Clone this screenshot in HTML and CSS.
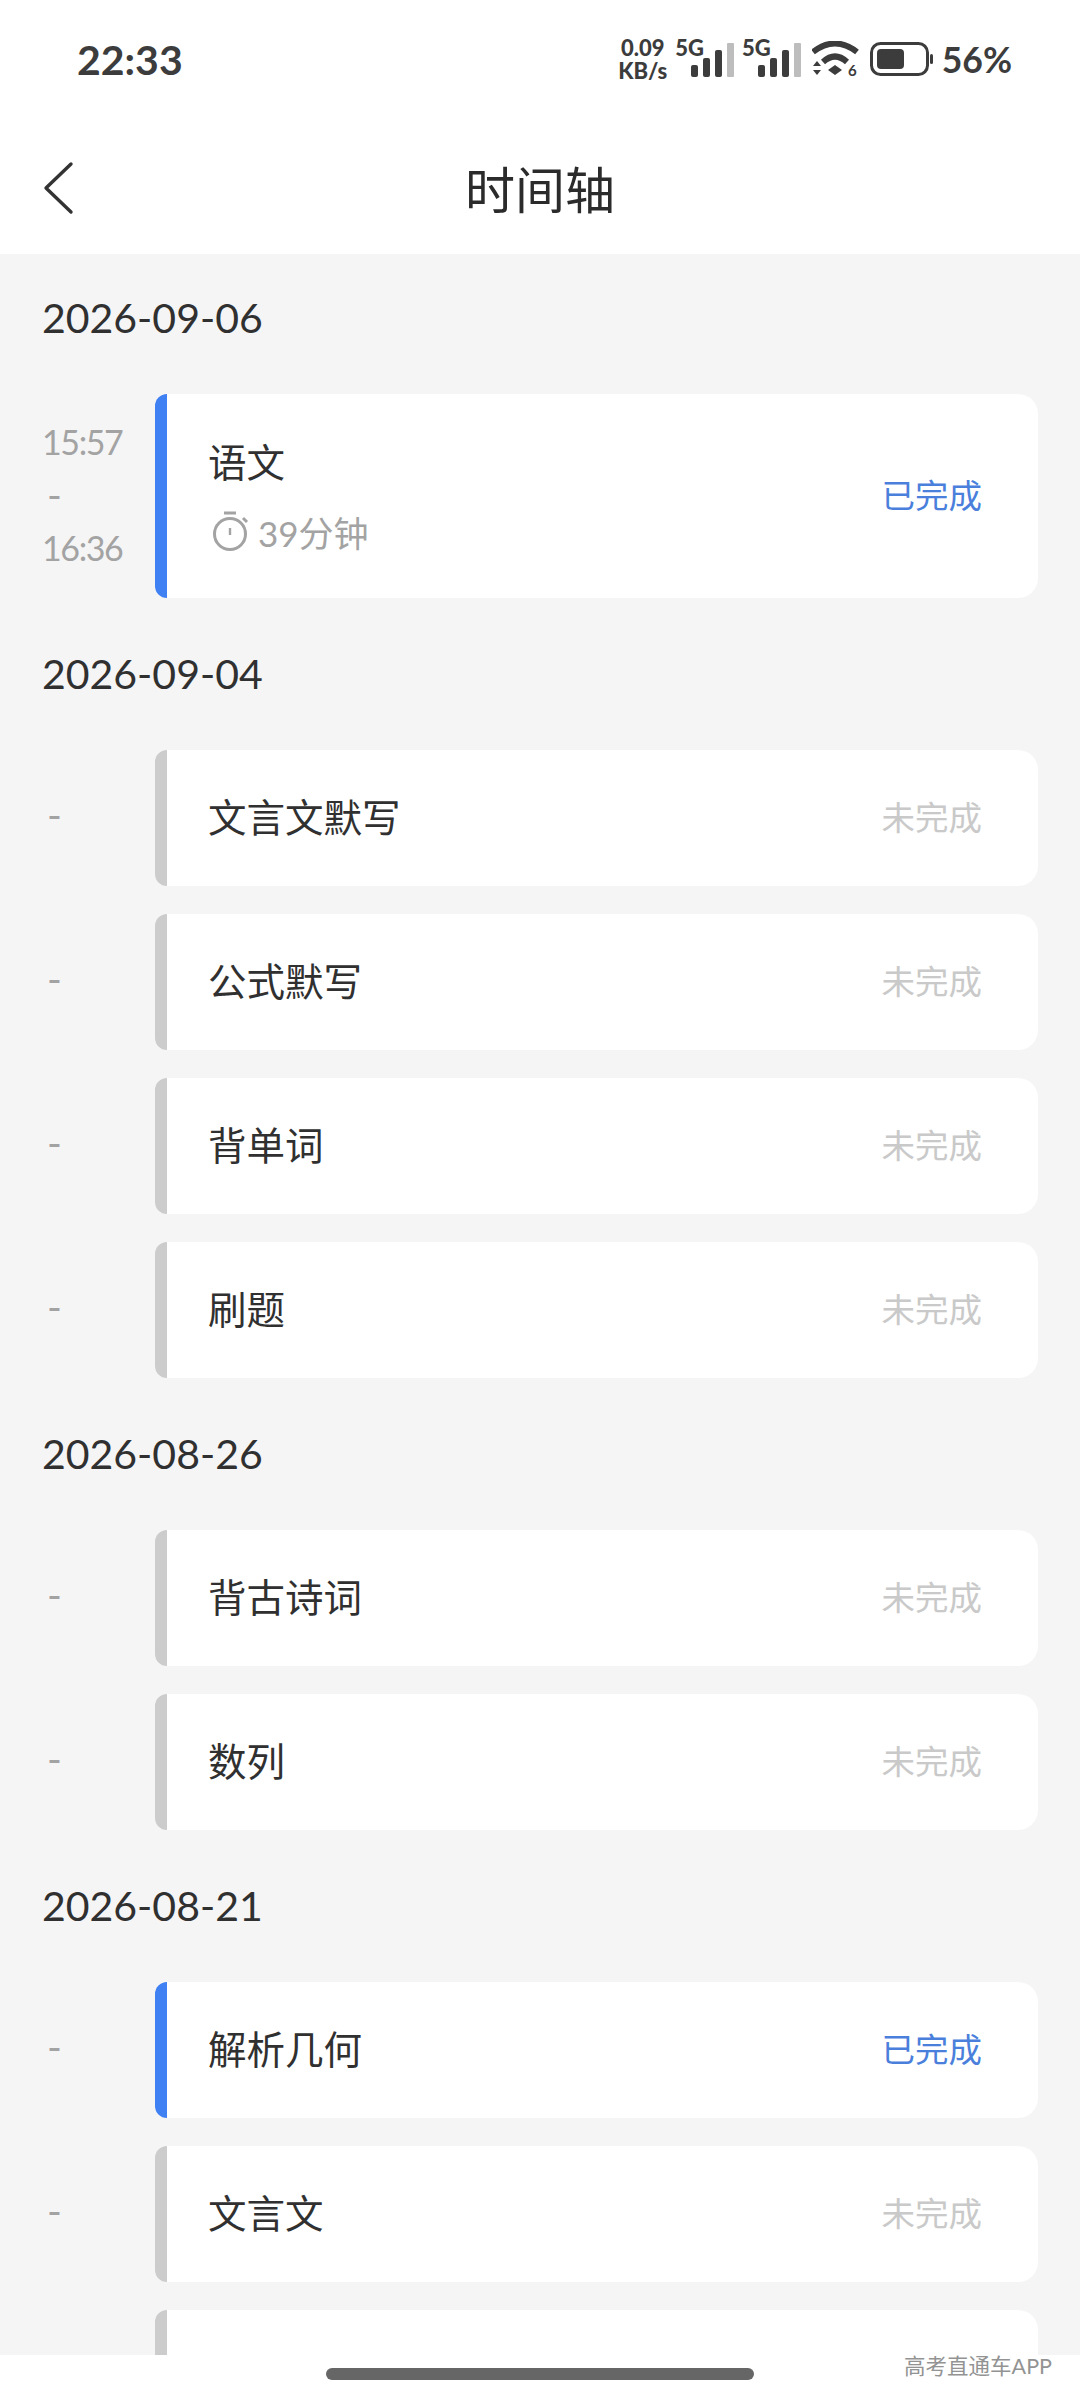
FILE: index.html
```html
<!DOCTYPE html>
<html lang="zh-CN">

<head>
    <meta charset="UTF-8">
    <meta name="viewport" content="width=device-width, initial-scale=1.0">
    <title>时间轴</title>

    <link rel="stylesheet" href="styles.css">
</head>

<body>
    <div class="phone">
        <div class="status">
            <span class="clock">22:33</span>
            <div class="status-right">
                <div class="speed"><span>0.09</span><span>KB/s</span></div>
                <div class="sim">
                    <span class="sim-label">5G</span>
                    <svg class="bars" width="43" height="34" viewBox="0 0 43 34">
                        <rect x="0" y="22" width="7" height="12" rx="2" fill="#3c3c3c"/>
                        <rect x="12" y="15" width="7" height="19" rx="2" fill="#3c3c3c"/>
                        <rect x="24" y="7" width="7" height="27" rx="2" fill="#3c3c3c"/>
                        <rect x="36" y="0" width="7" height="34" rx="1" fill="#bdbdbd"/>
                    </svg>
                </div>
                <div class="sim">
                    <span class="sim-label">5G</span>
                    <svg class="bars" width="43" height="34" viewBox="0 0 43 34">
                        <rect x="0" y="22" width="7" height="12" rx="2" fill="#3c3c3c"/>
                        <rect x="12" y="15" width="7" height="19" rx="2" fill="#3c3c3c"/>
                        <rect x="24" y="7" width="7" height="27" rx="2" fill="#3c3c3c"/>
                        <rect x="36" y="0" width="7" height="34" rx="1" fill="#bdbdbd"/>
                    </svg>
                </div>
                <svg class="wifi" width="48" height="40" viewBox="0 0 48 40">
                    <path d="M1 11 Q23 -6 45 11" fill="none" stroke="#3c3c3c" stroke-width="6"/>
                    <path d="M11 21 Q23 10 35 21" fill="none" stroke="#3c3c3c" stroke-width="6"/>
                    <path d="M16 29 L23 24 L30 29 L23 34 Z" fill="#3c3c3c"/>
                    <path d="M1 25 L5 20 L9 25 Z M1 29 L9 29 L5 34 Z" fill="#3c3c3c"/>
                    <text x="36" y="35" class="wifi-six">6</text>
                </svg>
                <svg class="battery" width="64" height="34" viewBox="0 0 64 34">
                    <rect x="1.5" y="1.5" width="56" height="31" rx="9" fill="none" stroke="#3c3c3c" stroke-width="3"/>
                    <rect x="7" y="7" width="27" height="20" rx="4" fill="#3c3c3c"/>
                    <rect x="60" y="12" width="3" height="10" rx="1.5" fill="#3c3c3c"/>
                </svg>
                <span class="percent">56%</span>
            </div>
        </div>

        <div class="navbar">
            <svg class="back" width="32" height="54" viewBox="0 0 32 54">
                <path d="M28 3 L3 27 L28 51" fill="none" stroke="#333" stroke-width="3.4" stroke-linecap="round" stroke-linejoin="round"/>
            </svg>
            <span class="nav-title">时间轴</span>
        </div>

        <div class="content">
            <div class="date">2026-09-06</div>
            <div class="row">
                <div class="times times-range">
                    <span>15:57</span>
                    <span class="dash">-</span>
                    <span>16:36</span>
                </div>
                <div class="card card-tall done">
                    <div class="card-main">
                        <div class="name">语文</div>
                        <div class="duration">
                            <svg width="38" height="40" viewBox="0 0 38 40">
                                <circle cx="19" cy="23" r="15.5" fill="none" stroke="#a3a3a3" stroke-width="3"/>
                                <path d="M13 2 H25" stroke="#a3a3a3" stroke-width="3"/>
                                <path d="M19 17 V24" stroke="#a3a3a3" stroke-width="2.4"/>
                                <path d="M32 7 L36 11" stroke="#a3a3a3" stroke-width="3"/>
                            </svg>
                            <span>39分钟</span>
                        </div>
                    </div>
                    <span class="state">已完成</span>
                </div>
            </div>

            <div class="date">2026-09-04</div>
            <div class="row"><div class="times"><span class="dash">-</span></div><div class="card"><div class="name">文言文默写</div><span class="state">未完成</span></div></div>
            <div class="row"><div class="times"><span class="dash">-</span></div><div class="card"><div class="name">公式默写</div><span class="state">未完成</span></div></div>
            <div class="row"><div class="times"><span class="dash">-</span></div><div class="card"><div class="name">背单词</div><span class="state">未完成</span></div></div>
            <div class="row"><div class="times"><span class="dash">-</span></div><div class="card"><div class="name">刷题</div><span class="state">未完成</span></div></div>

            <div class="date">2026-08-26</div>
            <div class="row"><div class="times"><span class="dash">-</span></div><div class="card"><div class="name">背古诗词</div><span class="state">未完成</span></div></div>
            <div class="row"><div class="times"><span class="dash">-</span></div><div class="card"><div class="name">数列</div><span class="state">未完成</span></div></div>

            <div class="date">2026-08-21</div>
            <div class="row"><div class="times"><span class="dash">-</span></div><div class="card done"><div class="name">解析几何</div><span class="state">已完成</span></div></div>
            <div class="row"><div class="times"><span class="dash">-</span></div><div class="card"><div class="name">文言文</div><span class="state">未完成</span></div></div>
            <div class="row"><div class="times"></div><div class="card"></div></div>
        </div>

        <div class="home-area">
            <div class="home-bar"></div>
            <span class="watermark">高考直通车APP</span>
        </div>
    </div>
</body>

</html>
```

FILE: styles.css
```css
* {
    box-sizing: border-box;
}

html, body {
    margin: 0;
    padding: 0;
}

body {
    font-family: "Lato", "Noto Sans CJK SC", sans-serif;
    color: #333;
}

.phone {
    width: 1080px;
    height: 2400px;
    display: flex;
    flex-direction: column;
    overflow: hidden;
    position: relative;
    background: #f5f5f6;
}

/* status bar */
.status {
    height: 120px;
    flex: none;
    background: #fff;
    display: flex;
    justify-content: space-between;
    align-items: center;
    padding: 0 68px 2px 77px;
    color: #3c3c3c;
}

.clock {
    font-size: 41px;
    font-weight: 700;
}

.status-right {
    display: flex;
    align-items: center;
    gap: 8px;
}

.speed {
    display: flex;
    flex-direction: column;
    align-items: center;
    font-size: 22px;
    font-weight: 900;
    line-height: 23px;
}

.sim {
    display: flex;
    justify-content: space-between;
    height: 36px;
}

.sim-label {
    font-size: 22px;
    font-weight: 900;
    line-height: 14px;
    margin-right: -13px;
}

.bars {
    align-self: flex-end;
}

.wifi {
    margin-left: 3px;
    margin-top: 4px;
}

.wifi-six {
    font-size: 15px;
    font-weight: 700;
    fill: #3c3c3c;
}

.battery {
    margin-left: 2px;
}

.percent {
    font-size: 35.5px;
    font-weight: 700;
}

/* title bar */
.navbar {
    height: 134px;
    flex: none;
    background: #fff;
    display: flex;
    align-items: center;
    justify-content: center;
    position: relative;
}

.back {
    position: absolute;
    left: 43px;
    top: 41px;
}

.nav-title {
    font-size: 50px;
    color: #2b2b2b;
}

/* timeline list */
.content {
    flex: 1;
    min-height: 0;
    overflow: hidden;
    padding: 16px 42px 0 42px;
}

.date {
    font-size: 41px;
    line-height: 48px;
    color: #303030;
    padding: 24px 0 52px;
}

.row {
    display: flex;
    margin-bottom: 28px;
}

.times {
    width: 113px;
    flex: none;
    display: flex;
    flex-direction: column;
    justify-content: center;
    gap: 13px;
    padding-bottom: 6px;
    font-size: 34px;
    line-height: 40px;
    letter-spacing: -1.4px;
    color: #a3a3a3;
}

.times-range {
    padding-bottom: 3px;
}

.dash {
    padding-left: 5px;
    font-size: 40px;
}

.card {
    flex: 1;
    height: 136px;
    background: linear-gradient(to right, #cccccc 12px, #fff 12px);
    border-radius: 12px 20px 20px 12px;
    display: flex;
    align-items: center;
    justify-content: space-between;
    padding: 0 56px 6px 53px;
}

.card-tall {
    height: 204px;
}

.done {
    background: linear-gradient(to right, #3f80f2 12px, #fff 12px);
}

.card-main {
    margin-top: 2px;
}

.name {
    font-size: 38.5px;
    color: #303030;
}

.duration {
    display: flex;
    align-items: center;
    gap: 9px;
    margin-top: 18px;
    margin-left: 3px;
    font-size: 35px;
    color: #a3a3a3;
}

.state {
    font-size: 33.5px;
    color: #c9c9c9;
}

.done .state {
    color: #4a7fdc;
}

/* bottom gesture area */
.home-area {
    height: 45px;
    flex: none;
    background: #fff;
    position: relative;
}

.home-bar {
    width: 428px;
    height: 12px;
    border-radius: 6px;
    background: #666;
    margin: 13px auto 0;
}

.watermark {
    position: absolute;
    right: 28px;
    top: -6px;
    font-size: 21.5px;
    color: #939393;
}
```
